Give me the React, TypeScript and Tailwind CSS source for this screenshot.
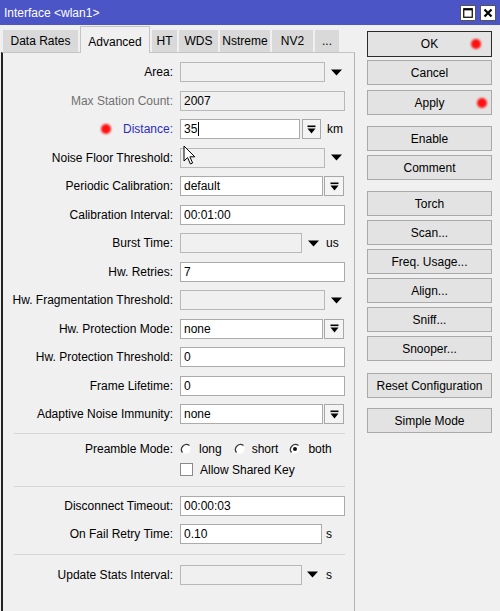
import React from "react";

const FONT = "font-['Liberation_Sans','Arial',sans-serif]";

function DropArrow({ className = "" }: { className?: string }) {
  return (
    <svg width="11" height="7" viewBox="0 0 11 7" className={className}>
      <polygon points="0,0.5 11,0.5 5.5,6.5" fill="#000" />
    </svg>
  );
}

function SpinButton({ w }: { w: string }) {
  return (
    <div
      className={`${w} h-[20px] bg-[#f4f4f4] border border-[#a8a8a8] flex items-center justify-center`}
    >
      <svg width="9" height="9" viewBox="0 0 9 9">
        <rect x="0.5" y="0.5" width="8" height="1.6" fill="#000" />
        <polygon points="0.5,3.6 8.5,3.6 4.5,8.4" fill="#000" />
      </svg>
    </div>
  );
}

function Field({
  w,
  value,
  disabled,
  children,
}: {
  w: string;
  value?: string;
  disabled?: boolean;
  children?: React.ReactNode;
}) {
  return (
    <div
      className={`${w} h-[20px] relative border flex items-center pl-[3px] ${
        disabled ? "bg-[#f0f0f0] border-[#b8b8b8]" : "bg-white border-[#ababab]"
      }`}
    >
      <span className="leading-none">{value}</span>
      {children}
    </div>
  );
}

function Row({
  label,
  labelClass = "",
  prefix,
  h = "h-[28.5px]",
  children,
}: {
  label: string;
  labelClass?: string;
  prefix?: React.ReactNode;
  h?: string;
  children: React.ReactNode;
}) {
  return (
    <div className={`flex items-center ${h}`}>
      <div className={`w-[170px] flex items-center justify-end ${labelClass}`}>
        {prefix}
        <span>{label}</span>
      </div>
      <div className="ml-[7px] flex items-center">{children}</div>
    </div>
  );
}

function Separator() {
  return <div className="ml-[11px] w-[331px] h-px bg-[#d6d6d6]" />;
}

function RedDot({ className = "" }: { className?: string }) {
  return (
    <span
      className={`block w-[10px] h-[10px] rounded-full bg-[#ff1010] blur-[1.2px] ${className}`}
    />
  );
}

function Radio({ checked }: { checked?: boolean }) {
  return (
    <svg width="12" height="12" viewBox="0 0 12 12">
      <circle cx="6" cy="6" r="5" fill="#fff" stroke="#f4f4f4" strokeWidth="1" />
      <path d="M9.5 2.5 A5 5 0 0 0 2.5 9.5" fill="none" stroke="#3a3a3a" strokeWidth="1.3" />
      {checked && <circle cx="6" cy="6" r="2" fill="#111" />}
    </svg>
  );
}

function Cursor() {
  return (
    <svg
      width="14"
      height="21"
      viewBox="0 0 14 21"
      className="absolute left-[2px] top-[-4px]"
    >
      <path
        d="M1 1 L1 16 L4.6 12.6 L7.4 19 L9.6 18 L6.9 11.8 L11.8 11.8 Z"
        fill="#fff"
        stroke="#000"
        strokeWidth="1"
        strokeLinejoin="round"
      />
    </svg>
  );
}

function Btn({
  label,
  mt,
  h = "h-[25px]",
  strong,
  dot,
}: {
  label: string;
  mt: string;
  h?: string;
  strong?: boolean;
  dot?: string;
}) {
  return (
    <div
      className={`${mt} ${h} relative w-[125px] flex items-center justify-center bg-[#e3e3e3] border ${
        strong ? "border-[#2b2b2b]" : "border-[#a9a9a9]"
      }`}
    >
      <span>{label}</span>
      {dot && <RedDot className={`absolute ${dot}`} />}
    </div>
  );
}

const tabs = [
  { label: "Data Rates", w: "w-[75px]" },
  { label: "Advanced", w: "w-[70px]", active: true },
  { label: "HT", w: "w-[25px]" },
  { label: "WDS", w: "w-[39px]" },
  { label: "Nstreme", w: "w-[50px]" },
  { label: "NV2", w: "w-[41px]" },
  { label: "...", w: "w-[24px]" },
];

export default function App() {
  return (
    <div
      className={`w-[500px] h-[611px] overflow-hidden bg-[#f0f0f0] text-[12px] text-black ${FONT} flex flex-col`}
    >
      {/* window caption */}
      <div className="h-[25px] shrink-0 bg-[#4b55c6] flex items-center pl-[4px] pr-[4px]">
        <span className="text-white leading-none">Interface &lt;wlan1&gt;</span>
        <div className="ml-auto flex gap-[4px]">
          <div className="w-[16px] h-[16px] bg-white border border-[#555] flex items-center justify-center">
            <svg width="10" height="10" viewBox="0 0 10 10">
              <rect x="0.75" y="0.75" width="8.5" height="8.5" fill="none" stroke="#000" strokeWidth="1.2" />
              <rect x="0.75" y="0.75" width="8.5" height="1.6" fill="#000" />
            </svg>
          </div>
          <div className="w-[16px] h-[16px] bg-white border border-[#555] flex items-center justify-center">
            <svg width="10" height="10" viewBox="0 0 10 10">
              <path d="M1.5 1.5 L8.5 8.5 M8.5 1.5 L1.5 8.5" stroke="#000" strokeWidth="2.2" />
            </svg>
          </div>
        </div>
      </div>

      <div className="flex flex-1 min-h-0">
        {/* tabbed settings */}
        <div className="w-[355px] flex flex-col">
          <div className="h-[27px] shrink-0 flex items-end gap-[2px] pl-[3px]">
            {tabs.map((t) =>
              t.active ? (
                <div
                  key={t.label}
                  className={`${t.w} h-[27px] -mb-px relative z-10 bg-[#f0f0f0] border-x border-t border-[#c4c4c4] flex items-start justify-center pt-[6px]`}
                >
                  {t.label}
                </div>
              ) : (
                <div
                  key={t.label}
                  className={`${t.w} h-[22px] bg-[#d9d9d9] flex items-center justify-center`}
                >
                  {t.label}
                </div>
              )
            )}
          </div>

          <div className="flex-1 ml-[1px] border-l-2 border-l-[#222] border-t border-t-[#c4c4c4] border-r border-r-[#b4b4b4] pt-[5px]">
            <Row label="Area:">
              <Field w="w-[145px]" disabled />
              <DropArrow className="ml-[6px]" />
            </Row>
            <Row label="Max Station Count:" labelClass="text-[#707070]">
              <Field w="w-[165px]" value="2007" disabled />
            </Row>
            <Row
              label="Distance:"
              labelClass="text-[#2c2cc0]"
              prefix={<RedDot className="mr-[12px]" />}
            >
              <Field w="w-[120px]" value="35">
                <span className="w-px h-[14px] bg-black ml-[1px]" />
              </Field>
              <div className="ml-[2px]">
                <SpinButton w="w-[19px]" />
              </div>
              <span className="ml-[6px]">km</span>
            </Row>
            <Row label="Noise Floor Threshold:">
              <Field w="w-[145px]" disabled>
                <Cursor />
              </Field>
              <DropArrow className="ml-[6px]" />
            </Row>
            <Row label="Periodic Calibration:">
              <Field w="w-[143px]" value="default" />
              <div className="ml-[1px]">
                <SpinButton w="w-[20px]" />
              </div>
            </Row>
            <Row label="Calibration Interval:">
              <Field w="w-[165px]" value="00:01:00" />
            </Row>
            <Row label="Burst Time:">
              <Field w="w-[122px]" disabled />
              <DropArrow className="ml-[6px]" />
              <span className="ml-[7px]">us</span>
            </Row>
            <Row label="Hw. Retries:">
              <Field w="w-[165px]" value="7" />
            </Row>
            <Row label="Hw. Fragmentation Threshold:">
              <Field w="w-[145px]" disabled />
              <DropArrow className="ml-[6px]" />
            </Row>
            <Row label="Hw. Protection Mode:">
              <Field w="w-[143px]" value="none" />
              <div className="ml-[1px]">
                <SpinButton w="w-[20px]" />
              </div>
            </Row>
            <Row label="Hw. Protection Threshold:">
              <Field w="w-[165px]" value="0" />
            </Row>
            <Row label="Frame Lifetime:">
              <Field w="w-[165px]" value="0" />
            </Row>
            <Row label="Adaptive Noise Immunity:">
              <Field w="w-[143px]" value="none" />
              <div className="ml-[1px]">
                <SpinButton w="w-[20px]" />
              </div>
            </Row>

            <div className="h-[4px]" />
            <Separator />

            <div className="mt-[5px]">
              <Row label="Preamble Mode:" h="h-[20px]">
                <div className="flex items-center">
                  <Radio />
                  <span className="ml-[7px]">long</span>
                  <span className="ml-[12px] flex">
                    <Radio />
                  </span>
                  <span className="ml-[6px]">short</span>
                  <span className="ml-[11px] flex">
                    <Radio checked />
                  </span>
                  <span className="ml-[7px]">both</span>
                </div>
              </Row>
              <div className="mt-[1px] h-[20px] flex items-center pl-[177px]">
                <span className="w-[13px] h-[13px] bg-white border border-[#8a8a8a]" />
                <span className="ml-[7px]">Allow Shared Key</span>
              </div>
            </div>

            <div className="h-[6px]" />
            <Separator />

            <div className="mt-[5px]">
              <Row label="Disconnect Timeout:" h="h-[28px]">
                <Field w="w-[165px]" value="00:00:03" />
              </Row>
              <Row label="On Fail Retry Time:" h="h-[29px]">
                <Field w="w-[142px]" value="0.10" />
                <span className="ml-[4px]">s</span>
              </Row>
            </div>

            <div className="h-[5px]" />
            <Separator />

            <div className="mt-[6px]">
              <Row label="Update Stats Interval:" h="h-[28px]">
                <Field w="w-[122px]" disabled />
                <DropArrow className="ml-[5px]" />
                <span className="ml-[8px]">s</span>
              </Row>
            </div>
          </div>
        </div>

        {/* command buttons */}
        <div className="ml-[12px] pt-[6px] flex flex-col">
          <Btn label="OK" mt="mt-0" h="h-[26px]" strong dot="right-[10px] top-[7px]" />
          <Btn label="Cancel" mt="mt-[3px]" />
          <Btn label="Apply" mt="mt-[5px]" dot="right-[4px] top-[7px]" />
          <Btn label="Enable" mt="mt-[11px]" />
          <Btn label="Comment" mt="mt-[4px]" />
          <Btn label="Torch" mt="mt-[11px]" />
          <Btn label="Scan..." mt="mt-[4px]" />
          <Btn label="Freq. Usage..." mt="mt-[4px]" />
          <Btn label="Align..." mt="mt-[4px]" />
          <Btn label="Sniff..." mt="mt-[4px]" />
          <Btn label="Snooper..." mt="mt-[4px]" />
          <Btn label="Reset Configuration" mt="mt-[12px]" />
          <Btn label="Simple Mode" mt="mt-[10px]" />
        </div>
      </div>
    </div>
  );
}
